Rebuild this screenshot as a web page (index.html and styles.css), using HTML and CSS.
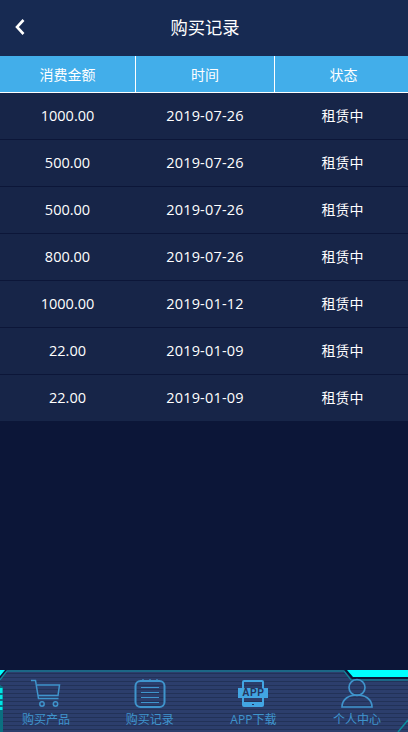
FILE: index.html
```html
<!DOCTYPE html>
<html lang="zh-CN">
<head>
<meta charset="utf-8">
<title>购买记录</title>
<link rel="stylesheet" href="styles.css">
</head>
<body>
<div class="page">
  <header class="topbar">
    <svg class="back" width="12" height="18" viewBox="0 0 12 18"><path d="M9.500 2 3 9l6.500 7" fill="none" stroke="#fff" stroke-width="2.600"/></svg>
    <h1 class="title">购买记录</h1>
  </header>
  <div class="thead">
    <div class="th">消费金额</div>
    <div class="th">时间</div>
    <div class="th status">状态</div>
  </div>
  <div class="row"><div class="td">1000.00</div><div class="td date">2019-07-26</div><div class="td status">租赁中</div></div>
  <div class="row"><div class="td">500.00</div><div class="td date">2019-07-26</div><div class="td status">租赁中</div></div>
  <div class="row"><div class="td">500.00</div><div class="td date">2019-07-26</div><div class="td status">租赁中</div></div>
  <div class="row"><div class="td">800.00</div><div class="td date">2019-07-26</div><div class="td status">租赁中</div></div>
  <div class="row"><div class="td">1000.00</div><div class="td date">2019-01-12</div><div class="td status">租赁中</div></div>
  <div class="row"><div class="td">22.00</div><div class="td date">2019-01-09</div><div class="td status">租赁中</div></div>
  <div class="row last"><div class="td">22.00</div><div class="td date">2019-01-09</div><div class="td status">租赁中</div></div>

  <nav class="tabbar">
    <svg class="deco" width="408" height="62" viewBox="0 0 408 62">
      <path d="M0 0H7L0 8Z" fill="#0c1638"/>
      <path d="M344 0H408V9H352Z" fill="#0c1638"/>
      <path d="M0 10 7 1H344L351 10H408" fill="none" stroke="#0c8f9f" stroke-width="1.200"/>
      <path d="M0 0H5L0 6Z" fill="#00ffff"/>
      <path d="M347 0H408V7H353Z" fill="#00ffff"/>
      <path d="M0 15 3 17V62H0Z" fill="#0b6f80"/>
      <path d="M0 18H2.500V23H0ZM0 25H2.500V29H0ZM0 31H2.500V35H0ZM0 37H2.500V40H0Z" fill="#00e6e6"/>
      <path d="M408 50 398 62" fill="none" stroke="#0c8f9f" stroke-width="1.500"/>
    </svg>
    <a class="tab">
      <svg class="icon" width="32" height="30" viewBox="0 0 32 30"><path d="M1 2.500H5.500L8.500 20.500H28.500M7 7H29.500L28 17.500H8" fill="none" stroke="#3f94cc" stroke-width="1.500"/><circle cx="12" cy="26" r="2.200" fill="none" stroke="#3f94cc" stroke-width="1.500"/><circle cx="25.500" cy="26" r="2.200" fill="none" stroke="#3f94cc" stroke-width="1.500"/></svg>
      <span class="label">购买产品</span>
    </a>
    <a class="tab">
      <svg class="icon" width="32" height="30" viewBox="0 0 32 30"><rect x="1.500" y="3" width="29" height="26" rx="5" fill="none" stroke="#3f94cc" stroke-width="2"/><path d="M7 9.500H25M7 14.500H25M7 19.500H25M7 24.500H25" stroke="#3f94cc" stroke-width="1"/><path d="M9 1V3M16 1V3M23 1V3" stroke="#3f94cc" stroke-width="1.200"/></svg>
      <span class="label">购买记录</span>
    </a>
    <a class="tab">
      <span class="appicon"><span class="appword">APP</span></span>
      <span class="label">APP下载</span>
    </a>
    <a class="tab">
      <svg class="icon" width="32" height="30" viewBox="0 0 32 30"><circle cx="16" cy="9.500" r="8" fill="none" stroke="#3f94cc" stroke-width="1.700"/><path d="M1 29C1 21 8 17 16 17S31 21 31 29Z" fill="none" stroke="#3f94cc" stroke-width="1.700"/></svg>
      <span class="label">个人中心</span>
    </a>
  </nav>
</div>
</body>
</html>
```

FILE: styles.css
```css
* { box-sizing: border-box; }
html, body { margin: 0; height: 100%; }
body {
  background: #0c1638;
  color: #fff;
  font-family: "Open Sans", "Noto Sans CJK SC", sans-serif;
  overflow: hidden;
}
.page { position: relative; width: 408px; height: 732px; }
.topbar {
  height: 56px;
  background: #172a52;
  display: flex;
  align-items: center;
  justify-content: center;
  position: relative;
}
.back { position: absolute; left: 14px; top: 18px; }
.title { margin: 0; padding-left: 2px; font-size: 17.300px; font-weight: 400; line-height: 56px; }
.thead {
  display: grid;
  grid-template-columns: 136px 139px 133px;
  height: 37px;
  background: #42aeea;
  border-bottom: 1.500px solid #fff;
}
.th {
  display: flex;
  align-items: center;
  justify-content: center;
  font-size: 14px;
  border-right: 1px solid #fff;
}
.th.status { border-right: 0; padding-left: 4px; }
.row {
  display: grid;
  grid-template-columns: 135px 140px 133px;
  height: 47px;
  padding-bottom: 1px;
  background: #172548;
  border-bottom: 1px solid #0c1638;
}
.row.last { border-bottom: 0; height: 46px; }
.td {
  display: flex;
  align-items: center;
  justify-content: center;
  font-size: 14.500px;
}
.td.date { letter-spacing: 0.200px; }
.td.status { font-size: 14px; padding: 0 0 2px 2px; }
.tabbar {
  position: absolute;
  left: 0;
  bottom: 0;
  width: 408px;
  height: 62px;
  display: grid;
  grid-template-columns: repeat(4, 92px);
  column-gap: 11.700px;
  padding-top: 8px;
  background:
    repeating-linear-gradient(180deg, #2c3e6c 0, #2c3e6c 3px, #223258 3px, #223258 4px);
}
.deco { position: absolute; left: 0; top: 0; }
.tab {
  position: relative;
  display: flex;
  flex-direction: column;
  align-items: center;
  justify-content: flex-start;
  color: #3f94cc;
}
.icon { display: block; height: 30px; }
.label { font-size: 12px; line-height: 14px; margin-top: 5px; white-space: nowrap; }
.appicon {
  width: 30px;
  height: 30px;
  display: flex;
  align-items: center;
  justify-content: center;
  position: relative;
}
.appicon::before {
  content: "";
  position: absolute;
  left: 4px; right: 4px; top: 2px; bottom: 1px;
  border: 2px solid #42a5e2;
  border-bottom-width: 5px;
  border-radius: 2px;
}
.appicon::after {
  content: "";
  position: absolute;
  left: 14px;
  bottom: 3px;
  width: 2px;
  height: 1px;
  background: #24345e;
}
.appword {
  position: relative;
  width: 30px;
  text-align: center;
  background: #42a5e2;
  color: #24345e;
  font: 700 10px/10px "Liberation Sans", sans-serif;
  letter-spacing: 0.500px;
}
```
